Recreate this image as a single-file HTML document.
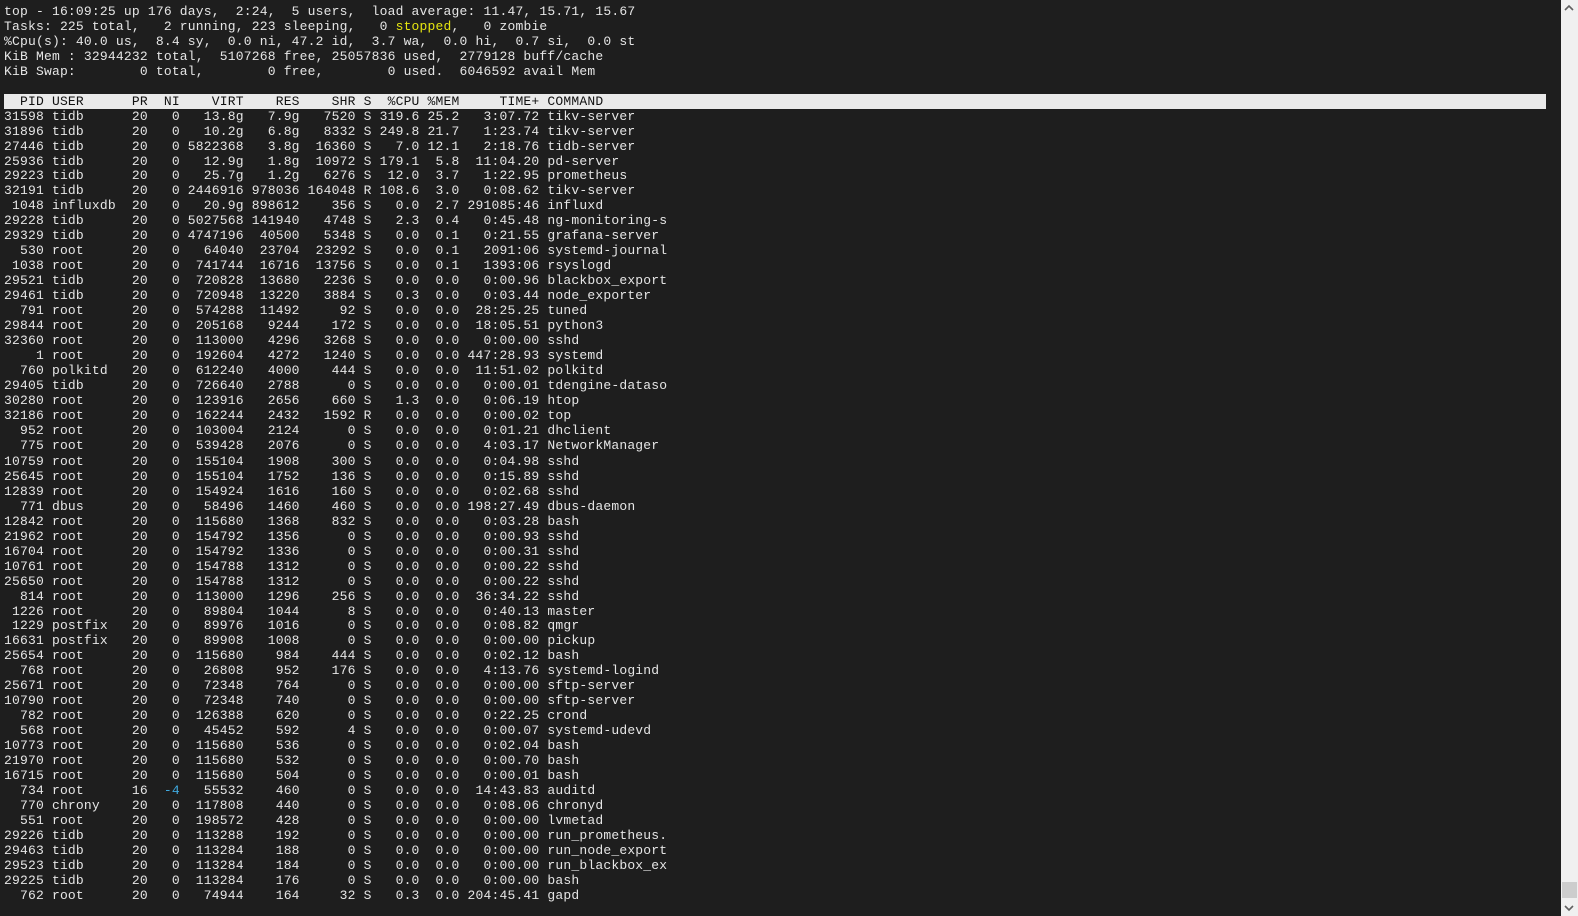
<!DOCTYPE html>
<html><head><meta charset="utf-8"><style>
html,body{margin:0;padding:0;background:#1e1e1e;width:1578px;height:916px;overflow:hidden}
.bar{position:absolute;left:4px;top:94px;width:1542px;height:15px;background:#eaeaea}
pre{position:absolute;left:4px;margin:0;font-family:"Liberation Mono",monospace;font-size:13px;letter-spacing:0.19px;line-height:14.95px;color:#e6e6e6;width:1542px}
.h{color:#111}
.y{color:#e5e510}.b{color:#3fa9df}
.sb{position:absolute;left:1561px;top:0;width:17px;height:916px;background:#f0f0f0}
.th{position:absolute;left:1562px;top:882px;width:15px;height:16px;background:#cdcdcd}
.ar{position:absolute;left:1564px;width:10px;height:8px}
</style></head><body>
<div class="bar"></div>
<pre style="top:5px">top - 16:09:25 up 176 days,  2:24,  5 users,  load average: 11.47, 15.71, 15.67
Tasks: 225 total,   2 running, 223 sleeping,   0 <span class="y">stopped</span>,   0 zombie
%Cpu(s): 40.0 us,  8.4 sy,  0.0 ni, 47.2 id,  3.7 wa,  0.0 hi,  0.7 si,  0.0 st
KiB Mem : 32944232 total,  5107268 free, 25057836 used,  2779128 buff/cache
KiB Swap:        0 total,        0 free,        0 used.  6046592 avail Mem

<span class="h">  PID USER      PR  NI    VIRT    RES    SHR S  %CPU %MEM     TIME+ COMMAND</span>
31598 tidb      20   0   13.8g   7.9g   7520 S 319.6 25.2   3:07.72 tikv-server
31896 tidb      20   0   10.2g   6.8g   8332 S 249.8 21.7   1:23.74 tikv-server
27446 tidb      20   0 5822368   3.8g  16360 S   7.0 12.1   2:18.76 tidb-server
25936 tidb      20   0   12.9g   1.8g  10972 S 179.1  5.8  11:04.20 pd-server
29223 tidb      20   0   25.7g   1.2g   6276 S  12.0  3.7   1:22.95 prometheus
32191 tidb      20   0 2446916 978036 164048 R 108.6  3.0   0:08.62 tikv-server
 1048 influxdb  20   0   20.9g 898612    356 S   0.0  2.7 291085:46 influxd
29228 tidb      20   0 5027568 141940   4748 S   2.3  0.4   0:45.48 ng-monitoring-s
29329 tidb      20   0 4747196  40500   5348 S   0.0  0.1   0:21.55 grafana-server
  530 root      20   0   64040  23704  23292 S   0.0  0.1   2091:06 systemd-journal
 1038 root      20   0  741744  16716  13756 S   0.0  0.1   1393:06 rsyslogd
29521 tidb      20   0  720828  13680   2236 S   0.0  0.0   0:00.96 blackbox_export
29461 tidb      20   0  720948  13220   3884 S   0.3  0.0   0:03.44 node_exporter
  791 root      20   0  574288  11492     92 S   0.0  0.0  28:25.25 tuned
29844 root      20   0  205168   9244    172 S   0.0  0.0  18:05.51 python3
32360 root      20   0  113000   4296   3268 S   0.0  0.0   0:00.00 sshd
    1 root      20   0  192604   4272   1240 S   0.0  0.0 447:28.93 systemd
  760 polkitd   20   0  612240   4000    444 S   0.0  0.0  11:51.02 polkitd
29405 tidb      20   0  726640   2788      0 S   0.0  0.0   0:00.01 tdengine-dataso
30280 root      20   0  123916   2656    660 S   1.3  0.0   0:06.19 htop
32186 root      20   0  162244   2432   1592 R   0.0  0.0   0:00.02 top
  952 root      20   0  103004   2124      0 S   0.0  0.0   0:01.21 dhclient
  775 root      20   0  539428   2076      0 S   0.0  0.0   4:03.17 NetworkManager</pre>
<pre style="top:455px">10759 root      20   0  155104   1908    300 S   0.0  0.0   0:04.98 sshd
25645 root      20   0  155104   1752    136 S   0.0  0.0   0:15.89 sshd
12839 root      20   0  154924   1616    160 S   0.0  0.0   0:02.68 sshd
  771 dbus      20   0   58496   1460    460 S   0.0  0.0 198:27.49 dbus-daemon
12842 root      20   0  115680   1368    832 S   0.0  0.0   0:03.28 bash
21962 root      20   0  154792   1356      0 S   0.0  0.0   0:00.93 sshd
16704 root      20   0  154792   1336      0 S   0.0  0.0   0:00.31 sshd
10761 root      20   0  154788   1312      0 S   0.0  0.0   0:00.22 sshd
25650 root      20   0  154788   1312      0 S   0.0  0.0   0:00.22 sshd
  814 root      20   0  113000   1296    256 S   0.0  0.0  36:34.22 sshd
 1226 root      20   0   89804   1044      8 S   0.0  0.0   0:40.13 master
 1229 postfix   20   0   89976   1016      0 S   0.0  0.0   0:08.82 qmgr
16631 postfix   20   0   89908   1008      0 S   0.0  0.0   0:00.00 pickup
25654 root      20   0  115680    984    444 S   0.0  0.0   0:02.12 bash
  768 root      20   0   26808    952    176 S   0.0  0.0   4:13.76 systemd-logind
25671 root      20   0   72348    764      0 S   0.0  0.0   0:00.00 sftp-server
10790 root      20   0   72348    740      0 S   0.0  0.0   0:00.00 sftp-server
  782 root      20   0  126388    620      0 S   0.0  0.0   0:22.25 crond
  568 root      20   0   45452    592      4 S   0.0  0.0   0:00.07 systemd-udevd
10773 root      20   0  115680    536      0 S   0.0  0.0   0:02.04 bash
21970 root      20   0  115680    532      0 S   0.0  0.0   0:00.70 bash
16715 root      20   0  115680    504      0 S   0.0  0.0   0:00.01 bash
  734 root      16  <span class="b">-4</span>   55532    460      0 S   0.0  0.0  14:43.83 auditd
  770 chrony    20   0  117808    440      0 S   0.0  0.0   0:08.06 chronyd
  551 root      20   0  198572    428      0 S   0.0  0.0   0:00.00 lvmetad
29226 tidb      20   0  113288    192      0 S   0.0  0.0   0:00.00 run_prometheus.
29463 tidb      20   0  113284    188      0 S   0.0  0.0   0:00.00 run_node_export
29523 tidb      20   0  113284    184      0 S   0.0  0.0   0:00.00 run_blackbox_ex
29225 tidb      20   0  113284    176      0 S   0.0  0.0   0:00.00 bash
  762 root      20   0   74944    164     32 S   0.3  0.0 204:45.41 gapd</pre>
<div class="sb"></div>
<div class="th"></div>
<svg class="ar" style="top:4px" viewBox="0 0 10 8"><path d="M1 6 L5 2 L9 6" stroke="#606060" stroke-width="1.6" fill="none"/></svg>
<svg class="ar" style="top:904px" viewBox="0 0 10 8"><path d="M1 2 L5 6 L9 2" stroke="#606060" stroke-width="1.6" fill="none"/></svg>
</body></html>
